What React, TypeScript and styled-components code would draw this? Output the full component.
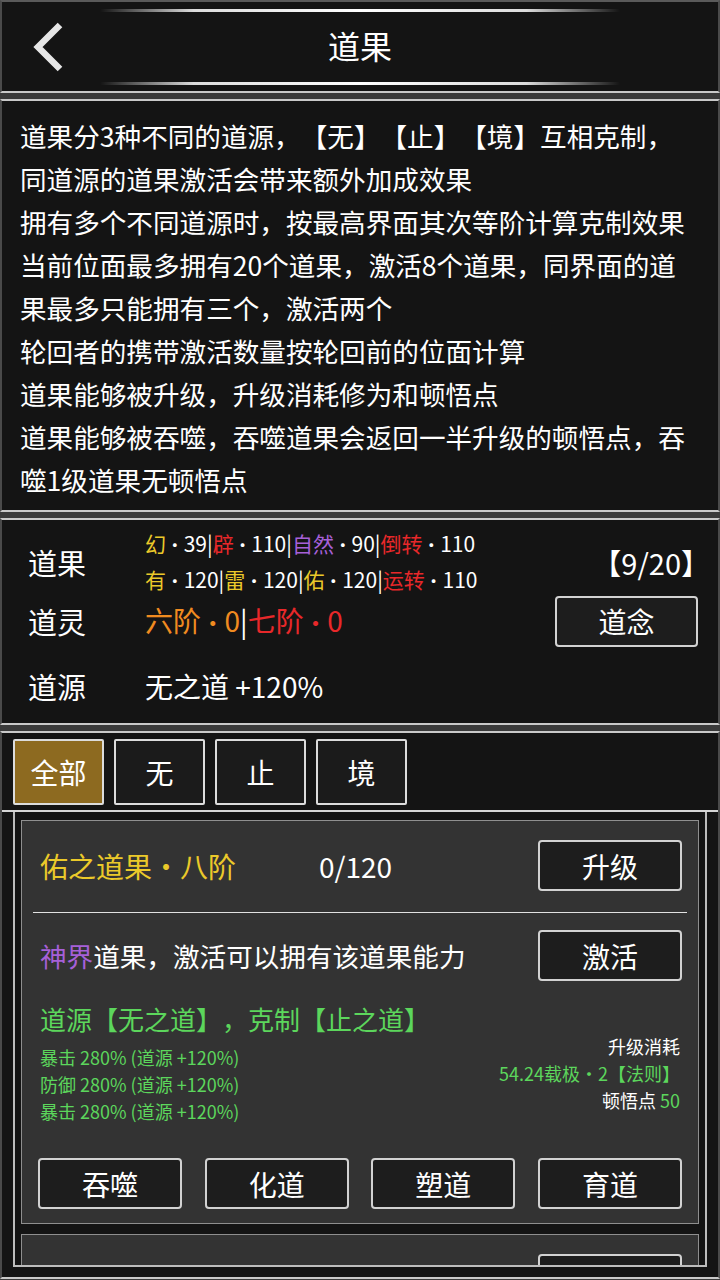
import React from "react";
import styled, { createGlobalStyle } from "styled-components";

const C = {
  white: "#ffffff",
  yellow: "#ebc92a",
  red: "#e8282a",
  purple: "#a660d8",
  orange: "#f08b20",
  green: "#5cd65c",
};

const GlobalStyle = createGlobalStyle`
  html, body {
    margin: 0;
    padding: 0;
    background: #3a3a3a;
  }
  body {
    font-family: "Noto Sans CJK SC", "Noto Sans", sans-serif;
    color: #fff;
    text-spacing-trim: space-all;
  }
  * {
    box-sizing: border-box;
  }
`;

const Screen = styled.div`
  width: 720px;
  height: 1280px;
  overflow: hidden;
  background: #3a3a3a;
  display: flex;
  flex-direction: column;
  gap: 6px;
`;

const Panel = styled.section`
  flex-shrink: 0;
  background: #141414;
  border-top: 2px solid #c9c9c9;
  border-bottom: 2px solid #c9c9c9;
  border-left: 2px solid #4a4a4a;
  border-right: 2px solid #4a4a4a;
`;

const Header = styled(Panel)`
  height: 93px;
  border-top-color: #5a5a5a;
  padding: 6.5px 0;
  display: flex;
  flex-direction: column;
`;

const GlowLine = styled.div`
  height: 3px;
  margin: 0 98px;
  border-radius: 2px;
  background: linear-gradient(
    90deg,
    rgba(255, 255, 255, 0) 0%,
    rgba(255, 255, 255, 0.85) 18%,
    #ffffff 50%,
    rgba(255, 255, 255, 0.85) 82%,
    rgba(255, 255, 255, 0) 100%
  );
`;

const TitleBar = styled.div`
  flex: 1;
  display: grid;
  grid-template-columns: 1fr auto 1fr;
  align-items: center;
`;

const BackButton = styled.button`
  justify-self: start;
  margin-left: 26px;
  width: 40px;
  height: 52px;
  padding: 0;
  border: none;
  background: none;
  display: flex;
  align-items: center;
  justify-content: center;
`;

const Title = styled.h1`
  margin: 0 0 3px;
  font-size: 32px;
  font-weight: 400;
  line-height: 40px;
  color: #fff;
`;

const Notes = styled(Panel)`
  height: 413px;
  padding: 12.5px 10px 8.5px 18px;
  margin: 0;
  list-style: none;
`;

const NoteLine = styled.li`
  font-size: 26.6px;
  line-height: 43px;
  white-space: nowrap;
  color: #fff;
`;

const Summary = styled(Panel)`
  height: 207px;
  padding: 5.5px 20px 12px 26px;
`;

const SummaryRow = styled.div<{ $h: number; $mt?: number }>`
  display: grid;
  grid-template-columns: 117px 1fr auto;
  align-items: center;
  height: ${({ $h }) => $h}px;
  margin-top: ${({ $mt }) => $mt ?? 0}px;
`;

const Label = styled.span`
  font-size: 29px;
  line-height: 40px;
  color: #fff;
`;

const FruitLines = styled.div`
  font-size: 21px;
  line-height: 35px;
  white-space: nowrap;
`;

const BigValue = styled.span`
  font-size: 28px;
  line-height: 40px;
  white-space: nowrap;
`;

const Dot = styled.span`
  font-size: 0.84em;
`;

const Count = styled.span`
  font-size: 29px;
  line-height: 40px;
  margin-right: -12px;
`;

const Tone = styled.span<{ $c: string }>`
  color: ${({ $c }) => $c};
`;

const Button = styled.button<{ $w?: number; $h?: number }>`
  width: ${({ $w }) => $w ?? 144}px;
  height: ${({ $h }) => $h ?? 51}px;
  padding: 0;
  flex-shrink: 0;
  border: 2px solid #d2d2d2;
  border-radius: 4px;
  background: #1d1d1d;
  color: #fff;
  font-family: inherit;
  font-size: 28px;
  line-height: 1;
`;

const Browser = styled(Panel)`
  height: 548px;
  padding-bottom: 10px;
`;

const TabBar = styled.div`
  display: flex;
  gap: 10px;
  padding: 6px 0 5px 11px;
  border-bottom: 2px solid #d6d6d6;
`;

const Tab = styled.button<{ $active?: boolean }>`
  width: 91px;
  height: 66px;
  padding: 0;
  border: 2px solid #dcdcdc;
  border-radius: 2px;
  background: ${({ $active }) => ($active ? "#8d6a20" : "#1b1b1b")};
  color: #fff;
  font-family: inherit;
  font-size: 28px;
`;

const FruitList = styled.div`
  height: 455px;
  margin: 0 11px;
  padding: 8px 6px 0;
  border: 2px solid #bdbdbd;
  border-top: none;
  overflow: hidden;
  display: flex;
  flex-direction: column;
  gap: 10px;
`;

const Card = styled.article`
  flex-shrink: 0;
  background: #333333;
  border: 1px solid #8f8f8f;
  padding: 0 16px 14px;
`;

const CardHead = styled.div`
  display: flex;
  align-items: center;
  margin-top: 19px;
`;

const CardTitle = styled.span`
  width: 281px;
  padding-left: 2px;
  font-size: 28px;
  color: ${C.yellow};
  white-space: nowrap;
`;

const Progress = styled.span`
  flex: 1;
  font-size: 28px;
  color: #fff;
`;

const Divider = styled.hr`
  margin: 21px -5px 0;
  border: none;
  height: 1px;
  background: #e2e2e2;
`;

const CardRow = styled.div`
  display: flex;
  align-items: center;
  justify-content: space-between;
  margin-top: 17px;
`;

const CardText = styled.span`
  padding-left: 2px;
  font-size: 26.6px;
  color: #fff;
  white-space: nowrap;
`;

const SourceLine = styled.div`
  margin-top: 21px;
  padding-left: 2px;
  font-size: 26px;
  line-height: 34px;
  color: ${C.green};
  white-space: nowrap;
`;

const Effects = styled.div`
  display: flex;
  justify-content: space-between;
  margin-top: -3px;
  padding: 0 2px;
`;

const EffectList = styled.div`
  padding-top: 11px;
  font-size: 18px;
  line-height: 27px;
  color: ${C.green};
  white-space: nowrap;
`;

const Cost = styled.div`
  text-align: right;
  font-size: 18px;
  line-height: 27px;
  color: #fff;
  white-space: nowrap;
`;

const ButtonBar = styled.div`
  display: flex;
  justify-content: space-between;
  margin-top: 33px;
`;

const notes = [
  "道果分3种不同的道源，【无】【止】【境】互相克制，",
  "同道源的道果激活会带来额外加成效果",
  "拥有多个不同道源时，按最高界面其次等阶计算克制效果",
  "当前位面最多拥有20个道果，激活8个道果，同界面的道",
  "果最多只能拥有三个，激活两个",
  "轮回者的携带激活数量按轮回前的位面计算",
  "道果能够被升级，升级消耗修为和顿悟点",
  "道果能够被吞噬，吞噬道果会返回一半升级的顿悟点，吞",
  "噬1级道果无顿悟点",
];

type Part = [string, string, number];

const fruitRows: Part[][] = [
  [
    ["幻", C.yellow, 39],
    ["辟", C.red, 110],
    ["自然", C.purple, 90],
    ["倒转", C.red, 110],
  ],
  [
    ["有", C.yellow, 120],
    ["雷", C.yellow, 120],
    ["佑", C.yellow, 120],
    ["运转", C.red, 110],
  ],
];

const effects = ["暴击 280% (道源 +120%)", "防御 280% (道源 +120%)", "暴击 280% (道源 +120%)"];

const FruitCard = () => (
  <Card>
    <CardHead>
      <CardTitle>佑之道果·八阶</CardTitle>
      <Progress>0/120</Progress>
      <Button>升级</Button>
    </CardHead>
    <Divider />
    <CardRow>
      <CardText>
        <Tone $c={C.purple}>神界</Tone>道果，激活可以拥有该道果能力
      </CardText>
      <Button>激活</Button>
    </CardRow>
    <SourceLine>道源【无之道】，克制【止之道】</SourceLine>
    <Effects>
      <EffectList>
        {effects.map((e, i) => (
          <div key={i}>{e}</div>
        ))}
      </EffectList>
      <Cost>
        <div>升级消耗</div>
        <Tone $c={C.green} as="div">
          54.24载极·2【法则】
        </Tone>
        <div>
          顿悟点 <Tone $c={C.green}>50</Tone>
        </div>
      </Cost>
    </Effects>
    <ButtonBar>
      <Button>吞噬</Button>
      <Button>化道</Button>
      <Button>塑道</Button>
      <Button>育道</Button>
    </ButtonBar>
  </Card>
);

export default function App() {
  return (
    <>
      <GlobalStyle />
      <Screen>
        <Header>
          <GlowLine />
          <TitleBar>
            <BackButton aria-label="返回">
              <svg width="36" height="52" viewBox="0 0 36 52">
                <polyline
                  points="30,4 8,26 30,48"
                  fill="none"
                  stroke="#e6e6e6"
                  strokeWidth="6.5"
                  strokeLinejoin="miter"
                />
              </svg>
            </BackButton>
            <Title>道果</Title>
            <span />
          </TitleBar>
          <GlowLine />
        </Header>

        <Notes as="ul">
          {notes.map((n, i) => (
            <NoteLine key={i}>{n}</NoteLine>
          ))}
        </Notes>

        <Summary>
          <SummaryRow $h={70}>
            <Label>道果</Label>
            <FruitLines>
              {fruitRows.map((row, r) => (
                <div key={r}>
                  {row.map(([name, color, n], i) => (
                    <React.Fragment key={i}>
                      {i > 0 && "|"}
                      <Tone $c={color}>{name}</Tone>
                      <Dot>·</Dot>
                      {n}
                    </React.Fragment>
                  ))}
                </div>
              ))}
            </FruitLines>
            <Count>【9/20】</Count>
          </SummaryRow>
          <SummaryRow $h={50}>
            <Label>道灵</Label>
            <BigValue>
              <Tone $c={C.orange}>
                六阶<Dot>·</Dot>0
              </Tone>
              |
              <Tone $c={C.red}>
                七阶<Dot>·</Dot>0
              </Tone>
            </BigValue>
            <Button $w={143}>道念</Button>
          </SummaryRow>
          <SummaryRow $h={50} $mt={15.5}>
            <Label>道源</Label>
            <BigValue>无之道 +120%</BigValue>
            <span />
          </SummaryRow>
        </Summary>

        <Browser>
          <TabBar>
            <Tab $active>全部</Tab>
            <Tab>无</Tab>
            <Tab>止</Tab>
            <Tab>境</Tab>
          </TabBar>
          <FruitList>
            <FruitCard />
            <FruitCard />
          </FruitList>
        </Browser>
      </Screen>
    </>
  );
}
